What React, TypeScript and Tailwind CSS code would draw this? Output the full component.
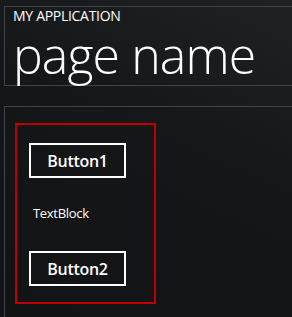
export default function App() {
  return (
    <div
      className="w-[292px] h-[317px] overflow-hidden bg-[linear-gradient(205deg,#202122_0%,#151617_45%,#121314_100%)] text-white"
      style={{ fontFamily: '"Open Sans", "Noto Sans", sans-serif' }}
    >
      <div className="ml-[4px] mt-[6px] h-[80px] border border-r-0 border-[#3c4452] pl-[8px]">
        <div className="text-[14px] leading-[18px] tracking-[-0.3px]">MY APPLICATION</div>
        <div className="text-[50px] font-light leading-[60px] tracking-[-0.9px]">page name</div>
      </div>

      <div className="ml-[4px] mt-[20px] h-[300px] border-l border-t border-[#3c4452] pl-[10px] pt-[16px]">
        <div className="flex h-[181px] w-[141px] flex-col border-2 border-[#c00000] pl-[12px] pt-[18px]">
          <button className="flex h-[35px] w-[97px] items-center justify-center border-2 border-white text-[16px] font-semibold tracking-[-0.3px]">
            Button1
          </button>
          <div className="ml-[4px] mt-[26px] text-[13px] leading-[18px] tracking-[-0.3px]">TextBlock</div>
          <button className="mt-[29px] flex h-[35px] w-[97px] items-center justify-center border-2 border-white text-[16px] font-semibold tracking-[-0.3px]">
            Button2
          </button>
        </div>
      </div>
    </div>
  );
}
